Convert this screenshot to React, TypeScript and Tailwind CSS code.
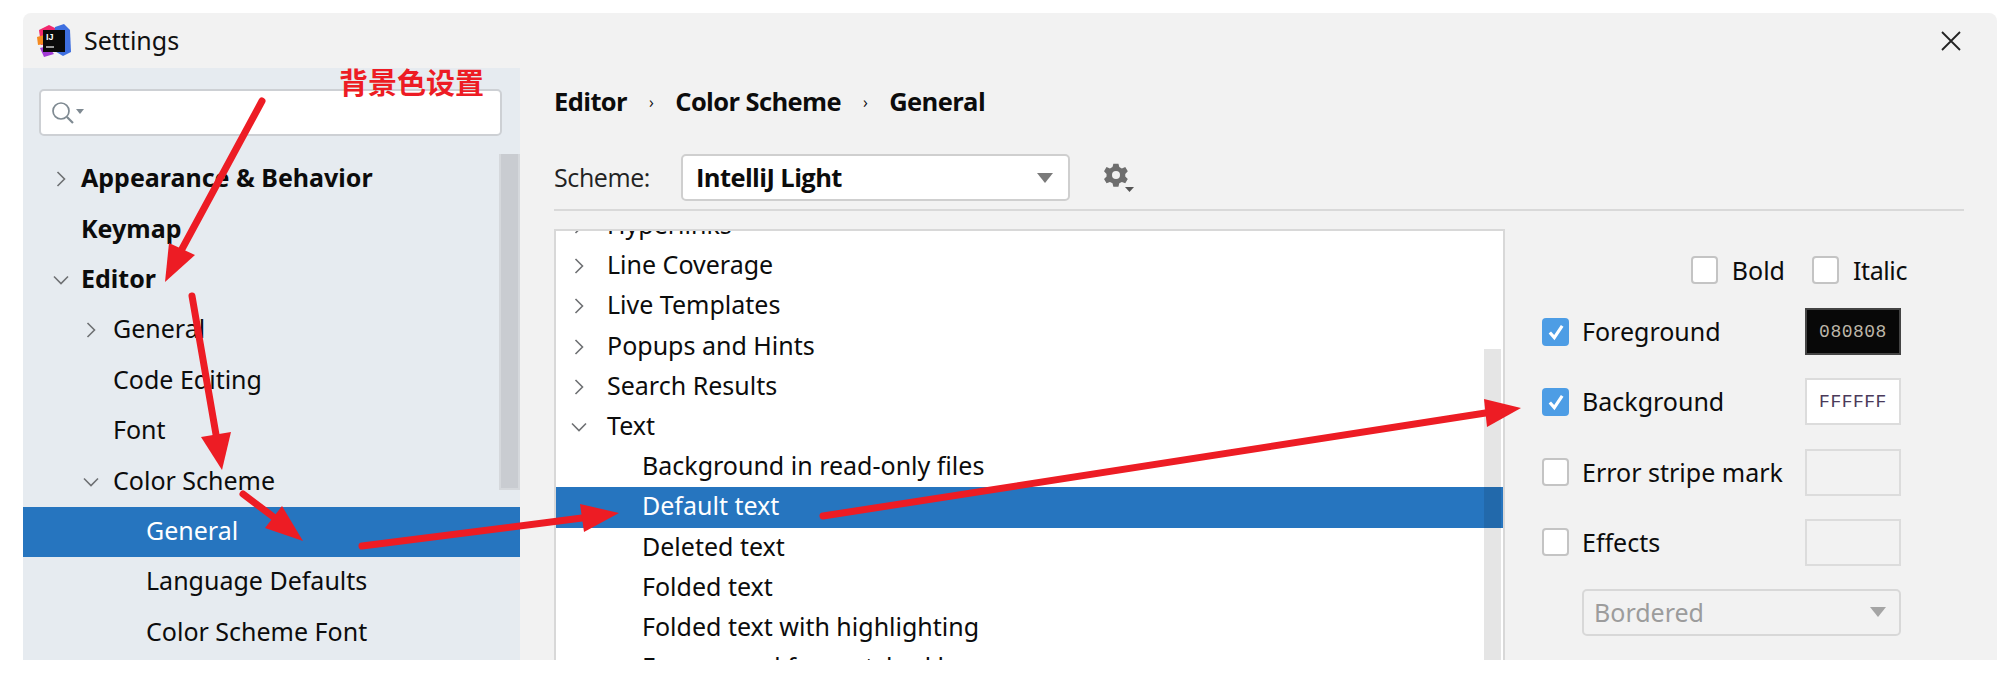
const sans = "font-['Noto_Sans','Open_Sans',sans-serif]";

function Chevron({ open, className }: { open?: boolean; className?: string }) {
  return (
    <svg viewBox="0 0 16 16" className={`w-4 h-4 shrink-0 ${className ?? ""}`} fill="none" stroke="#6e7073" strokeWidth="1.6">
      {open ? <path d="M1 4.5 8 11.5 15 4.5" /> : <path d="M4.5 1 11.5 8 4.5 15" />}
    </svg>
  );
}

function Logo() {
  return (
    <svg viewBox="0 0 34 34" className="w-[34px] h-[34px] shrink-0">
      <path d="M2 6 12 1l8 4-6 14-10 2z" fill="#f2286e" />
      <path d="M0 13l7-2v9l-6 1z" fill="#f58a1f" />
      <path d="M18 3l9-3 6 6 1 22-8 4-10-6z" fill="#3f6fe0" />
      <path d="M3 24l8-2 6 8-10 3z" fill="#a23bd6" />
      <rect x="6" y="6" width="22" height="22" fill="#0a0a0a" />
      <text x="9" y="16" fontSize="9" fontWeight="700" fill="#fff" fontFamily="Liberation Sans">IJ</text>
      <rect x="9" y="22" width="8" height="2" fill="#9a9a9a" />
    </svg>
  );
}

function Check({ on }: { on?: boolean }) {
  if (on) {
    return (
      <span className="w-[27px] h-[28px] rounded-[4px] bg-[#4d9de5] flex items-center justify-center shrink-0">
        <svg viewBox="0 0 16 16" className="w-[18px] h-[18px]" fill="none" stroke="#fff" strokeWidth="2.8"><path d="M2.5 8.5 6.5 13 13.5 2.5" /></svg>
      </span>
    );
  }
  return <span className="w-[27px] h-[28px] rounded-[4px] bg-white border-2 border-[#c4c4c4] shrink-0" />;
}

const sideItems = [
  { label: "Appearance & Behavior", bold: true, indent: 0, arrow: "right" },
  { label: "Keymap", bold: true, indent: 0 },
  { label: "Editor", bold: true, indent: 0, arrow: "down" },
  { label: "General", indent: 1, arrow: "right" },
  { label: "Code Editing", indent: 1 },
  { label: "Font", indent: 1 },
  { label: "Color Scheme", indent: 1, arrow: "down" },
  { label: "General", indent: 2, selected: true },
  { label: "Language Defaults", indent: 2 },
  { label: "Color Scheme Font", indent: 2 },
];

const indentPad = ["pl-[58px]", "pl-[90px]", "pl-[123px]"];

function Sidebar() {
  return (
    <div className="relative w-[497px] shrink-0 bg-[#e6ebf0] overflow-hidden">
      <div className="mt-[21px] ml-[16px] w-[463px] h-[47px] bg-white border-2 border-[#cdd0d4] rounded-[5px] flex items-center pl-[10px] gap-px">
        <svg viewBox="0 0 24 24" className="w-[24px] h-[24px]" fill="none" stroke="#7f8a92" strokeWidth="1.7">
          <circle cx="10" cy="10" r="8" />
          <path d="M16 16l6 6" strokeWidth="2.2" />
        </svg>
        <svg viewBox="0 0 8 5" className="w-[8px] h-[5px] -mt-[2px]"><path d="M0 0h8L4 5z" fill="#7f8a92" /></svg>
      </div>
      <div className="mt-[18px]">
        {sideItems.map((it, i) => (
          <div
            key={i}
            className={`relative h-[50.4px] pb-[3px] flex items-center text-[25px] leading-none ${sans} ${indentPad[it.indent]} ${it.bold ? "font-bold" : ""} ${it.selected ? "bg-[#2675bf] text-white" : "text-[#0c0c0c]"}`}
          >
            {it.arrow && (
              <span className={`absolute top-1/2 -translate-y-1/2 ${it.indent === 0 ? "left-[30px]" : "left-[60px]"}`}>
                <Chevron open={it.arrow === "down"} />
              </span>
            )}
            <span>{it.label}</span>
          </div>
        ))}
      </div>
      <div className="absolute left-[476px] top-[86px] w-[21px] h-[336px] bg-[#c9ccd1] border-2 border-[#d5d8dc] border-t-0" />
    </div>
  );
}

const treeItems = [
  { label: "Hyperlinks", arrow: "right", depth: 0 },
  { label: "Line Coverage", arrow: "right", depth: 0 },
  { label: "Live Templates", arrow: "right", depth: 0 },
  { label: "Popups and Hints", arrow: "right", depth: 0 },
  { label: "Search Results", arrow: "right", depth: 0 },
  { label: "Text", arrow: "down", depth: 0 },
  { label: "Background in read-only files", depth: 1 },
  { label: "Default text", depth: 1, selected: true },
  { label: "Deleted text", depth: 1 },
  { label: "Folded text", depth: 1 },
  { label: "Folded text with highlighting", depth: 1 },
  { label: "Foreground for matched braces", depth: 1 },
];

function Tree() {
  return (
    <div className="relative w-[951px] shrink-0 bg-white border-2 border-b-0 border-[#d8d8d8] overflow-hidden">
      <div className="-mt-[25px]">
        {treeItems.map((it, i) => (
          <div
            key={i}
            className={`relative h-[40.2px] pb-[3px] flex items-center text-[25px] leading-none ${sans} ${it.depth ? "pl-[86px]" : "pl-[51px]"} ${it.selected ? "bg-[#2675bf] text-white" : "text-[#0c0c0c]"}`}
          >
            {it.arrow && (
              <span className="absolute left-[15px] top-1/2 -translate-y-1/2">
                <Chevron open={it.arrow === "down"} />
              </span>
            )}
            {it.label}
          </div>
        ))}
      </div>
      <div className="absolute right-[2px] top-[118px] bottom-0 w-[17px] bg-black/10" />
    </div>
  );
}

function Swatch({ value, dark }: { value?: string; dark?: boolean }) {
  return (
    <div
      className={`ml-auto w-[96px] h-[47px] border-2 flex items-center justify-center text-[18px] tracking-[0.5px] font-['Liberation_Mono',monospace] ${dark ? "bg-[#080808] border-[#444] text-[#bdb6a8]" : value ? "bg-white border-[#dcdcdc] text-[#4a3a5a]" : "border-[#dcdcdc]"}`}
    >
      {value}
    </div>
  );
}

const attrs = [
  { label: "Foreground", on: true, value: "080808", dark: true },
  { label: "Background", on: true, value: "FFFFFF" },
  { label: "Error stripe mark" },
  { label: "Effects" },
];

function Attributes() {
  return (
    <div className={`flex-1 pl-[37px] pr-[63px] text-[25px] leading-none text-[#0c0c0c] ${sans}`}>
      <div className="flex items-center justify-end gap-[14px] mt-[27px]">
        <Check />
        <span className="mr-[13px]">Bold</span>
        <Check />
        <span className="-mr-[6px] tracking-[-0.4px]">Italic</span>
      </div>
      <div className="mt-[24px] flex flex-col gap-[23.3px]">
        {attrs.map((a) => (
          <div key={a.label} className="flex items-center gap-[13px]">
            <Check on={a.on} />
            <span>{a.label}</span>
            <Swatch value={a.value} dark={a.dark} />
          </div>
        ))}
      </div>
      <div className="mt-[23px] ml-[40px] h-[47px] border-2 border-[#d8d8d8] rounded-[5px] flex items-center justify-between pl-[10px] pr-[13px] text-[#9c9c9c]">
        Bordered
        <svg viewBox="0 0 16 10" className="w-4 h-[10px]"><path d="M0 0h16L8 10z" fill="#a5a5a5" /></svg>
      </div>
    </div>
  );
}

function Main() {
  return (
    <div className="flex-1 flex flex-col min-w-0 pl-[34px] pr-[33px]">
      <div className="mt-[20px] h-[28px] flex items-center gap-[22px] text-[25.5px] font-bold leading-none text-[#0c0c0c] font-['Open_Sans',sans-serif] tracking-[-0.6px]">
        <span>Editor</span>
        <span className="text-[16px] font-normal">›</span>
        <span>Color Scheme</span>
        <span className="text-[16px] font-normal">›</span>
        <span>General</span>
      </div>
      <div className="mt-[38px] flex items-center h-[47px]">
        <span className="w-[127px] text-[25px] text-[#222] font-['Open_Sans',sans-serif] tracking-[-0.4px]">Scheme:</span>
        <div className="w-[389px] h-[47px] bg-white border-2 border-[#cfcfcf] rounded-[5px] flex items-center justify-between pl-[13px] pr-[15px]">
          <span className="text-[25.5px] font-bold text-[#0c0c0c] font-['Open_Sans',sans-serif] tracking-[-0.6px]">IntelliJ Light</span>
          <svg viewBox="0 0 16 10" className="w-4 h-[10px]"><path d="M0 0h16L8 10z" fill="#7a7a7a" /></svg>
        </div>
        <svg viewBox="0 0 32 32" className="w-[32px] h-[32px] ml-[34px]">
          <path d="M11 2h6l1 4 3 1.5 4-1.5 3 5-3 3v3l3 3-3 5-4-1.5L18 25l-1 4h-6l-1-4-3-1.5L3 25l-3-5 3-3v-3L0 11l3-5 4 1.5L10 6z" fill="#6e6e6e" transform="scale(0.85)" />
          <circle cx="12" cy="13" r="4" fill="#f2f2f2" />
          <path d="M21 25h9l-4.5 5z" fill="#555" />
        </svg>
      </div>
      <div className="mt-[8px] h-[2px] bg-[#d9d9d9]" />
      <div className="mt-[18px] flex flex-1 min-h-0">
        <Tree />
        <Attributes />
      </div>
    </div>
  );
}

function Arrow({ from, tip, wing1, wing2 }: { from: number[]; tip: number[]; wing1: number[]; wing2: number[] }) {
  const notchX = (wing1[0] + wing2[0]) / 2;
  const notchY = (wing1[1] + wing2[1]) / 2;
  return (
    <>
      <line x1={from[0]} y1={from[1]} x2={notchX} y2={notchY} stroke="#ed1c24" strokeWidth="7" strokeLinecap="round" />
      <polygon points={`${tip} ${wing1} ${wing2}`} fill="#ed1c24" />
    </>
  );
}

export default function App() {
  return (
    <div className="relative w-[2008px] h-[678px] bg-white overflow-hidden">
      <div className="absolute left-[23px] top-[13px] w-[1974px] h-[647px] bg-[#f2f2f2] rounded-t-[8px] flex flex-col overflow-hidden">
        <div className="h-[55px] shrink-0 flex items-center pl-[14px] pr-[36px]">
          <Logo />
          <span className={`ml-[13px] text-[25px] text-[#111] ${sans}`}>Settings</span>
          <svg viewBox="0 0 20 20" className="ml-auto w-5 h-5" fill="none" stroke="#222" strokeWidth="1.8"><path d="M1 1l18 18M19 1 1 19" /></svg>
        </div>
        <div className="flex flex-1 min-h-0">
          <Sidebar />
          <Main />
        </div>
      </div>

      <span className="absolute left-[339px] top-[64px] text-[29px] leading-[34px] font-bold text-[#ed1c24] font-['Noto_Sans_CJK_SC',sans-serif]">背景色设置</span>

      {/* annotation arrows */}
      <svg viewBox="0 0 2008 678" className="absolute inset-0 w-[2008px] h-[678px] pointer-events-none">
        <Arrow from={[262, 101]} tip={[165, 282]} wing1={[169, 243]} wing2={[195, 255]} />
        <Arrow from={[192, 296]} tip={[222, 470]} wing1={[201, 437]} wing2={[231, 432]} />
        <Arrow from={[243, 494]} tip={[303, 541]} wing1={[282, 506]} wing2={[265, 528]} />
        <Arrow from={[362, 546]} tip={[619, 513]} wing1={[580, 504]} wing2={[584, 532]} />
        <Arrow from={[823, 516]} tip={[1521, 408]} wing1={[1484, 399]} wing2={[1487, 427]} />
      </svg>
    </div>
  );
}
